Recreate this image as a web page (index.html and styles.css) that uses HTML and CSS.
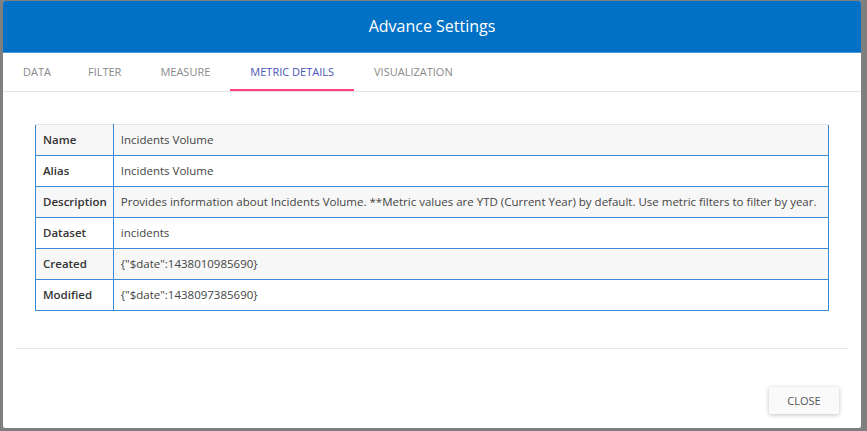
FILE: index.html
```html
<!DOCTYPE html>
<html>
<head>
<meta charset="utf-8">
<link rel="stylesheet" href="styles.css">
</head>
<body>
<div class="modal">
  <div class="header">Advance Settings</div>
  <div class="tabs">
    <div class="tab">DATA</div>
    <div class="tab">FILTER</div>
    <div class="tab">MEASURE</div>
    <div class="tab active">METRIC DETAILS</div>
    <div class="tab">VISUALIZATION</div>
  </div>
  <div class="content">
    <table class="details">
      <tr class="odd"><th>Name</th><td>Incidents Volume</td></tr>
      <tr><th>Alias</th><td>Incidents Volume</td></tr>
      <tr class="odd"><th>Description</th><td>Provides information about Incidents Volume. **Metric values are YTD (Current Year) by default. Use metric filters to filter by year.</td></tr>
      <tr><th>Dataset</th><td>incidents</td></tr>
      <tr class="odd"><th>Created</th><td>{"$date":1438010985690}</td></tr>
      <tr><th>Modified</th><td>{"$date":1438097385690}</td></tr>
    </table>
  </div>
  <div class="divider"></div>
  <div class="footer">
    <button class="close">CLOSE</button>
  </div>
</div>
</body>
</html>
```
FILE: styles.css
```css
html, body {
  margin: 0;
  padding: 0;
  background: #7f7f7f;
  height: 100%;
  overflow: hidden;
}
body {
  font-family: "Open Sans", "Noto Sans", sans-serif;
  padding: 1px 0 0 3px;
}
.modal {
  width: 858px;
  height: 427px;
  background: #fff;
  border-radius: 2px;
  overflow: hidden;
  display: flex;
  flex-direction: column;
}
.header {
  height: 50px;
  background: #0071c5;
  border-bottom: 1px solid #4a9be0;
  color: #fff;
  font-size: 16px;
  display: flex;
  align-items: center;
  justify-content: center;
  padding-bottom: 1px;
  box-sizing: content-box;
}
.tabs {
  height: 38px;
  border-bottom: 1px solid #e3e3e3;
  display: flex;
  padding-left: 0;
}
.tab {
  font-size: 11px;
  color: #8a8a8a;
  display: flex;
  align-items: center;
  padding: 0 20px;
  height: 36px;
  border-bottom: 2px solid transparent;
}
.tab:nth-child(1) { padding-left: 20px; padding-right: 17px; }
.tab:nth-child(2) { padding-right: 19px; }
.tab.active {
  color: #4a56b8;
  border-bottom-color: #ff4081;
}
.content {
  padding: 32px 32px 0 32px;
}
.details {
  width: 794px;
  border-collapse: collapse;
  font-size: 11.5px;
  border: 1px solid #3a8ad6;
  border-top-color: #dfe6ee;
}
.details tr { height: 31px; }
.details tr.odd { background: #f7f7f7; }
.details th, .details td {
  border-top: 1px solid #3a8ad6;
  padding: 0 7px 2px 7px;
  text-align: left;
  vertical-align: middle;
}
.details tr:first-child th, .details tr:first-child td { border-top-color: #dfe6ee; }
.details th {
  width: 62px;
  padding-right: 6px;
  font-weight: 600;
  color: #333;
  border-right: 1px solid #3a8ad6;
}
.details td {
  color: #444;
}
.divider {
  margin: 37px 13px 0 13px;
  border-top: 1px solid #e8e8e8;
}
.footer {
  display: flex;
  justify-content: flex-end;
  padding: 38px 22px 0 0;
}
.close {
  width: 70px;
  height: 27px;
  border: none;
  background: #fafafa;
  color: #555;
  font-family: "Open Sans", "Noto Sans", sans-serif;
  font-size: 11px;
  border-radius: 2px;
  box-shadow: 0 1px 4px rgba(0,0,0,0.25);
}
```
